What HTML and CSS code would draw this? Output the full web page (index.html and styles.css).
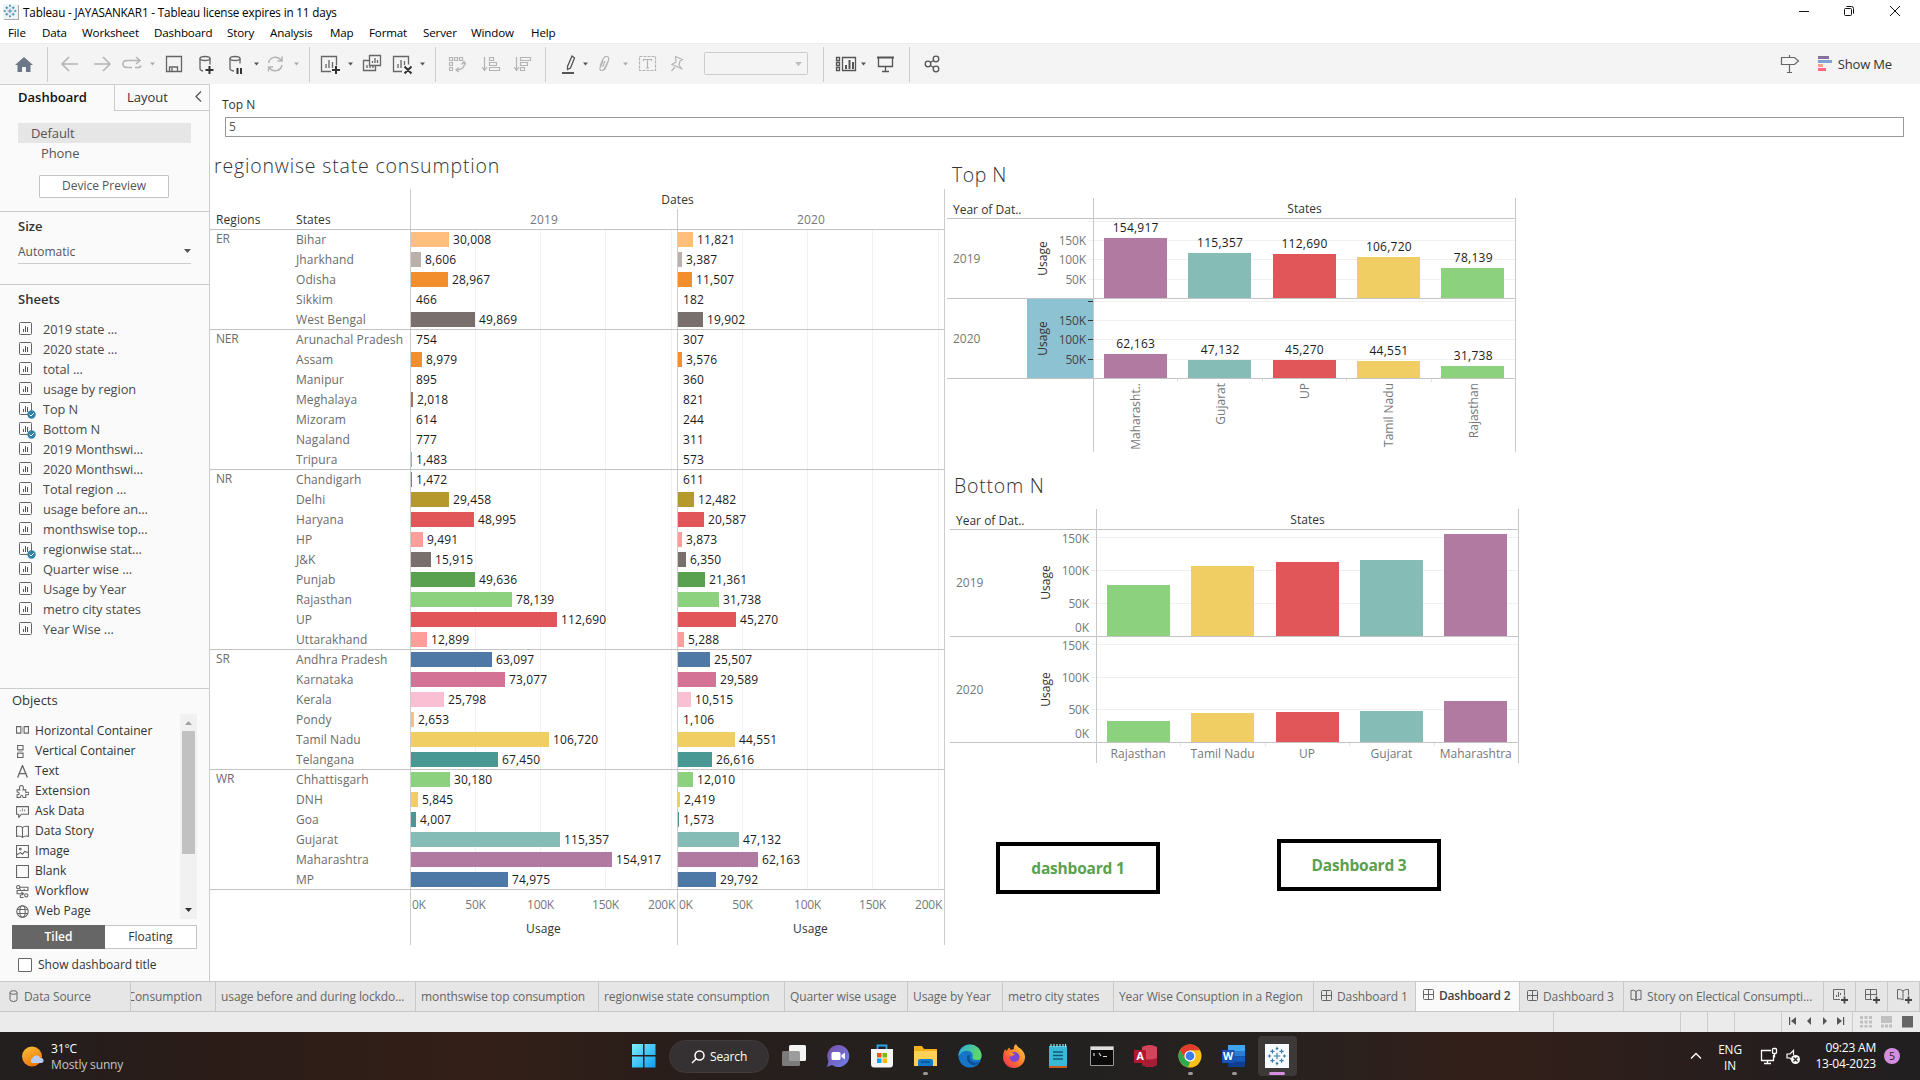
FILE: index.html
```html
<!DOCTYPE html>
<html lang="en">
<head>
<meta charset="utf-8">
<title>Tableau - JAYASANKAR1</title>
<link rel="stylesheet" href="styles.css">
</head>
<body>
<svg class="defs" width="0" height="0">
  <defs>
    <symbol id="tableau" viewBox="0 0 24 24"><path d="M12 8v8M8 12h8M12 1v4M10.300 3h3.400M12 19v4M10.300 21h3.400M1 12h4M3 10.300v3.400M19 12h4M21 10.300v3.400M6.500 4v5M4 6.500h5M17.500 4v5M15 6.500h5M6.500 15v5M4 17.500h5M17.500 15v5M15 17.500h5" fill="none" stroke="currentColor" stroke-width="1.400"/></symbol>
    <symbol id="sheet" viewBox="0 0 14 14"><rect x=".5" y=".5" width="12" height="12" rx="1" fill="none" stroke="#666"/><path d="M4.500 7v3M6.500 4v6M8.500 5v5" stroke="#555" fill="none"/></symbol>
    <symbol id="grid" viewBox="0 0 12 12"><rect x=".5" y=".5" width="10" height="10" rx="1" fill="none" stroke="#666"/><path d="M5.500 1v10M1 5.500h10" stroke="#666"/></symbol>
    <symbol id="book" viewBox="0 0 13 13"><path d="M1 1.500q3-1 5 1v9q-2-2-5-1zM11 1.500q-3-1-5 1v9q2-2 5-1z" fill="none" stroke="#666"/></symbol>
  </defs>
</svg>

<header class="titlebar">
  <span class="appicon"><svg width="14" height="14"><use href="#tableau"/></svg></span>
  <span class="title">Tableau - JAYASANKAR1 - Tableau license expires in 11 days</span>
  <svg class="winbtns" width="104" height="20" viewBox="0 0 104 20" fill="none" stroke="#111">
    <path d="M1 10.500h10"/><rect x="46.500" y="7.500" width="7" height="7" rx="1"/><path d="M48.500 5.500h5q2 0 2 2v5"/><path d="M92 5l10 10M102 5L92 15"/>
  </svg>
</header>
<nav class="menubar"><span>File</span><span>Data</span><span>Worksheet</span><span>Dashboard</span><span>Story</span><span>Analysis</span><span>Map</span><span>Format</span><span>Server</span><span>Window</span><span>Help</span></nav>

<div class="toolbar">
  <svg width="950" height="41" viewBox="0 43 950 41" fill="none">
    <path d="M47.500 47v35M309.500 47v35M435.500 47v35M545.500 47v35M823.500 47v35M909.500 47v35" stroke="#ccc"/>
    <path d="M24 57l-9 8h2.500v7h4.500v-5h4v5h4.500v-7H33z" fill="#6c7887"/>
    <g stroke="#b4b4b4" stroke-width="1.500">
      <path d="M62 64h16M69 57l-7 7 7 7M94 64h16M103 57l7 7-7 7"/>
      <path d="M132 67.500h-5q-4 0-4-3.500t4-3.500h12M136 57l4 3.500-4 3.500M135 67.500h3q2.500 0 3-2"/>
      <path d="M268.500 63a7 7 0 0 1 12.500-3M282 65a7 7 0 0 1-12.500 3M282 56.500v4.500h-4.500M268.500 71.500V67h4.500"/>
    </g>
    <g stroke="#666" stroke-width="1.300">
      <path d="M166.500 56.500h15v15h-15zM169.500 71v-4h8v4M172 71v-3"/>
      <ellipse cx="205" cy="58.500" rx="5" ry="2"/><path d="M200 58.500v10q0 2 3 2.500M210 58.500v6"/>
      <ellipse cx="235" cy="58.500" rx="5" ry="2"/><path d="M230 58.500v10q0 2 4 2.500M240 58.500v5"/>
      <path d="M331 71.500h-9.500v-15h15v9M326 68v-4M329 68v-8M332.500 68v-6"/>
      <path d="M369.500 55.500h11v10h-11zM372.500 63v-2M375 63v-5M377.500 63v-3M369 60.500h-5.500v10h12V66M367 68v-3M370 68v-2M373 68v-2"/>
      <path d="M402 71.500h-8.500v-15h15v8M398 68v-4M401 68v-8M404.500 65v-4"/>
    </g>
    <path d="M209.500 66v8M205.500 70h8M336 66v8M332 70h8M237.500 68v6M241 68v6M404.500 66.500l7 7M411.500 66.500l-7 7" stroke="#333" stroke-width="2"/>
    <g stroke="#b4b4b4" stroke-width="1.200">
      <path d="M449.500 57.500h3v3h-3zM454.500 57.500h3v3h-3zM459.500 57.500h3v3h-3zM449.500 62.500h3v3h-3zM449.500 67.500h3v3h-3zM464 62q2 7-7 8M461.500 64.500l2.500-3 2 3M459 67.500l-3 2.500 3 2"/>
      <path d="M484.500 57v13M482 67l2.500 3.500L487 67M489.500 57.500h4v3h-4zM489.500 62.500h7v3h-7zM489.500 67.500h10v3h-10z"/>
      <path d="M516.500 57v13M514 67l2.500 3.500L519 67M520.500 57.500h10v3h-10zM520.500 62.500h7v3h-7zM520.500 67.500h4v3h-4z"/>
      <path d="M603 61l-3 7q-.5 2.500 1.500 2.500t3-2l4-8q.8-3.500-1.500-4t-4 2.500l-3 7M605 61l-2.500 6"/>
      <path d="M608 62l-2.500 6q-1 2.500-3 2.500"/>
      <rect x="639.500" y="56.500" width="16" height="14" stroke-dasharray="3 1"/>
      <path d="M643.500 61v-1.500h8V61M647.500 60v8M646 68h3"/>
      <path d="M675.500 56.500l7 3-2.500 1.500-1 4 2.500 3.500-9.500-4 4-2.500zM675 67l-3.500 4"/>
    </g>
    <path d="M572 56l2.500 2-4 10-3 1.500v-3z" stroke="#555" stroke-width="1.300"/><path d="M562 73h12" stroke="#555" stroke-width="2"/>
    <rect x="704.500" y="52.500" width="103" height="22" rx="1" stroke="#ccc"/>
    <path d="M795 62h7l-3.500 4z" fill="#bbb"/>
    <path d="M150 62.500h5l-2.500 3zM294 62.500h5l-2.500 3zM623 62.500h5l-2.500 3z" fill="#aaa"/>
    <path d="M254 62.500h5l-2.500 3zM348 62.500h5l-2.500 3zM420 62.500h5l-2.500 3zM583 62.500h5l-2.500 3zM861 62.500h5l-2.500 3z" fill="#555"/>
    <g stroke="#555" stroke-width="1.300">
      <path d="M842.500 57.500h13v13h-13zM836.500 57.500h3v3h-3zM836.500 62.500h3v3h-3zM836.500 67.500h3v3h-3z"/><path d="M846 69v-4M849.500 69v-9M853 69v-7" stroke-width="2"/>
      <path d="M878.500 58v8.500h14V58M885.500 67v5M882 71.500h7"/><path d="M877 57.500h17" stroke-width="2"/>
      <circle cx="928" cy="64" r="2.800"/><circle cx="936" cy="59" r="2.800"/><circle cx="936" cy="69" r="2.800"/><path d="M930.500 62.500l3-2M930.500 65.500l3 2"/>
    </g>
  </svg>
  <div class="showme">
    <svg width="20" height="20" viewBox="0 0 20 20" fill="none" stroke="#666" stroke-width="1.200"><path d="M1.500 3.500h13l4 3.500-4 3.500h-13zM9.500 1v2M9.500 11v7M7 18.500h5"/></svg>
    <svg class="showme-icon" width="14" height="16" viewBox="0 0 14 16"><path d="M0 0h11v3H0z" fill="#86709b"/><path d="M0 4h14v3H0z" fill="#7fa3cf"/><path d="M0 8h5v3H0z" fill="#f2a384"/><path d="M0 12h8v3H0z" fill="#fb6c7c"/></svg>
    <span>Show Me</span>
  </div>
</div>

<div class="workspace">
  <aside class="side">
    <div class="side-tabs"><b>Dashboard</b><span class="tab-off">Layout<svg width="7" height="11" viewBox="0 0 7 11" fill="none" stroke="#555" stroke-width="1.300"><path d="M6 .5l-5 5 5 5"/></svg></span></div>
    <section class="device">
      <div class="dev sel">Default</div>
      <div class="dev phone">Phone</div>
      <div class="preview">Device Preview</div>
    </section>
    <section class="size">
      <h3>Size</h3>
      <div class="select"><span>Automatic</span><svg width="7" height="5"><path d="M0 0h7l-3.500 4z" fill="#555"/></svg></div>
    </section>
    <section class="sheets">
      <h3>Sheets</h3>
      <ul id="sheets"></ul>
    </section>
    <section class="objects">
      <h4>Objects</h4>
      <div class="objwrap">
        <ul id="objects"></ul>
        <div class="scroll"><svg width="7" height="4"><path d="M0 4h7l-3.500-4z" fill="#a0a0a0"/></svg><i></i><svg width="7" height="4"><path d="M0 0h7l-3.500 4z" fill="#333"/></svg></div>
      </div>
      <div class="toggle"><b>Tiled</b><span>Floating</span></div>
      <label class="check"><i></i>Show dashboard title</label>
    </section>
  </aside>

  <main class="canvas">
    <div class="param"><div class="param-name">Top N</div><div class="param-box">5</div></div>
    <div class="views">
      <section class="region-view">
        <h2>regionwise state consumption</h2>
        <div class="rtable">
          <div class="rhead">
            <div class="rh-regions">Regions</div><div class="rh-states">States</div>
            <div class="rh-dates"><div class="dates">Dates</div><div class="years"><span>2019</span><span>2020</span></div></div>
          </div>
          <div id="groups"></div>
          <div class="raxis">
            <div></div>
            <div class="axis"><div class="ticks"><span>0K</span><span>50K</span><span>100K</span><span>150K</span><span>200K</span></div><div class="axis-name">Usage</div></div>
            <div class="axis"><div class="ticks"><span>0K</span><span>50K</span><span>100K</span><span>150K</span><span>200K</span></div><div class="axis-name">Usage</div></div>
          </div>
        </div>
      </section>
      <section class="rank-views">
        <h2 class="t-top">Top N</h2>
        <svg id="topn" class="chart" width="570" height="255"></svg>
        <h2 class="t-bottom">Bottom N</h2>
        <svg id="bottomn" class="chart chart-b" width="570" height="255"></svg>
        <div class="links"><a class="l1">dashboard 1</a><a class="l3">Dashboard 3</a></div>
      </section>
    </div>
  </main>
</div>

<div class="tabs">
  <span class="tab ds"><svg width="9" height="12" viewBox="0 0 9 12" fill="none" stroke="#666"><ellipse cx="4.500" cy="2.500" rx="3.500" ry="1.800"/><path d="M1 2.500v7q0 2 3.500 2t3.500-2v-7"/></svg>Data Source</span>
  <span class="tab t1"><em>Consumption</em></span>
  <span class="tab t2">usage before and during lockdo...</span>
  <span class="tab t3">monthswise top consumption</span>
  <span class="tab t4">regionwise state consumption</span>
  <span class="tab t5">Quarter wise usage</span>
  <span class="tab t6">Usage by Year</span>
  <span class="tab t7">metro city states</span>
  <span class="tab t8">Year Wise Consuption in a Region</span>
  <span class="tab t9"><svg width="12" height="12"><use href="#grid"/></svg>Dashboard 1</span>
  <span class="tab t10 on"><svg width="12" height="12"><use href="#grid"/></svg>Dashboard 2</span>
  <span class="tab t11"><svg width="12" height="12"><use href="#grid"/></svg>Dashboard 3</span>
  <span class="tab t12"><svg width="13" height="13"><use href="#book"/></svg>Story on Electical Consumpti...</span>
  <span class="tab new"><svg width="16" height="16" viewBox="0 0 16 16" fill="none" stroke="#666"><path d="M8 11.500H1.500v-10h11v6M4.500 9V7M6.500 9V4M8.500 7V5"/><path d="M12.500 8.500v7M9 12h7" stroke="#444" stroke-width="1.800"/></svg></span>
  <span class="tab new"><svg width="16" height="16" viewBox="0 0 16 16" fill="none" stroke="#666"><path d="M8 11.500H1.500v-10h11v6M6.500 1.500v10M1.500 6.500h11"/><path d="M12.500 8.500v7M9 12h7" stroke="#444" stroke-width="1.800"/></svg></span>
  <span class="tab new"><svg width="16" height="16" viewBox="0 0 16 16" fill="none" stroke="#666"><path d="M7 3v9q-2-2-5.500-1V1.500Q5 1 7 3q2-2 5.500-1.500v6"/><path d="M12.500 8.500v7M9 12h7" stroke="#444" stroke-width="1.800"/></svg></span>
</div>
<div class="status">
  <i class="s1"></i><i class="s2"></i><i class="s3"></i><i class="s4"></i>
  <span class="nav"><svg width="56" height="8" viewBox="0 0 56 8" fill="#555"><path d="M0 0h1.200v8H0zM7 0v8L2 4zM22 0v8l-4-4zM34 0v8l4-4zM48 0v8l5-4zM54 0h1.200v8H54z"/></svg></span>
  <span class="modes"><svg width="54" height="12" viewBox="0 0 54 12"><path d="M0 0h3v3H0zM4.500 0h3v3h-3zM9 0h3v3H9zM0 4.500h3v3H0zM4.500 4.500h3v3h-3zM9 4.500h3v3H9zM0 9h3v2.500H0zM4.500 9h3v2.500h-3zM9 9h3v2.500H9zM21 0h11v7H21zM21 8.500h3v3h-3zM25 8.500h3v3h-3zM29 8.500h3v3h-3z" fill="#c0c0c0"/><path d="M42 0h11v11.500H42z" fill="#666"/></svg></span>
</div>

<footer class="taskbar">
  <div class="weather">
    <svg width="24" height="24" viewBox="0 0 24 24"><defs><linearGradient id="sun" x1="0" y1="0" x2=".5" y2="1"><stop offset="0" stop-color="#f7c136"/><stop offset="1" stop-color="#f0780f"/></linearGradient></defs><circle cx="11" cy="11.500" r="10" fill="url(#sun)"/><path d="M11 18a3 3 0 0 1 .5-5 4.500 4.500 0 0 1 8 0 2.500 2.500 0 0 1 1 5z" fill="#b7cdf8"/></svg>
    <div><div class="temp">31°C</div><div class="sky">Mostly sunny</div></div>
  </div>
  <div class="apps">
    <span class="app"><svg width="24" height="24" viewBox="0 0 24 24"><defs><linearGradient id="win" x1="0" y1="0" x2="1" y2="1"><stop offset="0" stop-color="#7ff0fb"/><stop offset="1" stop-color="#0b9cf5"/></linearGradient></defs><path d="M0 0h11v11H0zM12.500 0h11v11h-11zM0 12.500h11v11H0zM12.500 12.500h11v11h-11z" fill="url(#win)"/></svg></span>
    <span class="search"><svg width="14" height="14" viewBox="0 0 14 14" fill="none" stroke="#fff" stroke-width="1.500"><circle cx="8.500" cy="5.500" r="4.500"/><path d="M5.500 8.500L1 13"/></svg>Search</span>
    <span class="app"><svg width="26" height="24" viewBox="0 0 26 24"><rect x="8" y="1" width="17" height="16" rx="1.500" fill="#f4f4f4"/><rect x="1" y="7" width="18" height="15" rx="1.500" fill="#8c8c8c" fill-opacity=".85"/></svg></span>
    <span class="app"><svg width="24" height="24" viewBox="0 0 24 24"><defs><linearGradient id="chat" x1="0" y1="0" x2="1" y2="1"><stop offset="0" stop-color="#7a4fa8"/><stop offset="1" stop-color="#6d7fe8"/></linearGradient></defs><path d="M12 1a11 11 0 1 1-6 20l-5 2 1.500-6A11 11 0 0 1 12 1z" fill="url(#chat)"/><rect x="5.500" y="8" width="9" height="8" rx="1.500" fill="#fff"/><path d="M15.500 11l3.500-2.500v7L15.500 13z" fill="#fff"/></svg></span>
    <span class="app"><svg width="24" height="24" viewBox="0 0 24 24"><path d="M7.500 5V1.500h9V5" fill="none" stroke="#2aa5ea" stroke-width="1.800"/><path d="M1 5h22v15q0 3.500-3 3.500H4q-3 0-3-3.500z" fill="#f5f5f5"/><path d="M7 9h4.500v4.500H7z" fill="#f25022"/><path d="M12.500 9H17v4.500h-4.500z" fill="#7fba00"/><path d="M7 14.500h4.500V19H7z" fill="#00a4ef"/><path d="M12.500 14.500H17V19h-4.500z" fill="#ffb900"/></svg></span>
    <span class="app run"><svg width="25" height="24" viewBox="0 0 25 24"><path d="M1 2h8l2 3H24v17H1z" fill="#f2b01e"/><path d="M1 7h23v15H1z" fill="#ffd257"/><path d="M5 22v-5q0-2 2-2h11q2 0 2 2v5z" fill="#1479c9"/><path d="M8 18h9" stroke="#0a5a9c" stroke-width="2"/></svg></span>
    <span class="app"><svg width="24" height="24" viewBox="0 0 24 24"><defs><linearGradient id="edge" x1="0" y1="0" x2="1" y2=".3"><stop offset="0" stop-color="#2aa9e0"/><stop offset="1" stop-color="#5fd86a"/></linearGradient></defs><circle cx="12" cy="12" r="11.500" fill="#1576c8"/><path d="M.5 12A11.500 11.500 0 0 1 23.500 12q0 4-4 4-6 0-5-3 1-5-4-6-6-1-10 5z" fill="url(#edge)"/><path d="M9 12q-1 8 7 9.500 3-.5 5-3.500-6 2-9-2-1-3 0-5-2 0-3 1z" fill="#0c4f96"/></svg></span>
    <span class="app"><svg width="24" height="24" viewBox="0 0 24 24"><defs><linearGradient id="ff" x1="1" y1="0" x2="0" y2="1"><stop offset="0" stop-color="#ffdc3c"/><stop offset=".5" stop-color="#ff7a2a"/><stop offset="1" stop-color="#f1255f"/></linearGradient></defs><path d="M3 5l1.500 2L7 3.500 9 6q2-1 3-1-1-3 2-5 2 4 5 5 4 4 4 8a11 11 0 0 1-22 0q0-4 2-8z" fill="url(#ff)"/><circle cx="12.500" cy="13" r="5" fill="#7b45d8"/><path d="M7 9q4-1 6 2-3 0-4 2z" fill="#ff8f2b"/></svg></span>
    <span class="app"><svg width="20" height="24" viewBox="0 0 20 24"><path d="M1 2h18v20H1z" fill="#39b8d8"/><path d="M1 22h18v2H1z" fill="#c65b1c"/><path d="M3 0v3M6 0v3M9 0v3M12 0v3M15 0v3M17.500 0v3" stroke="#a7e4f2" stroke-width="1.200"/><path d="M5 8h10M5 11.500h10M5 15h10" stroke="#105a78" stroke-width="1.500"/></svg></span>
    <span class="app"><svg width="24" height="22" viewBox="0 0 24 22"><path d="M.5 1.500h23v19H.5z" fill="#0a0a0a" stroke="#999"/><path d="M1 2h22v3H1z" fill="#ddd"/><path d="M4 8v3M7 8.500h.1M7 11h.1M9 8l2 3M13 11.500h4" stroke="#ddd" stroke-width="1.200"/></svg></span>
    <span class="app"><svg width="24" height="24" viewBox="0 0 24 24"><path d="M8 3q8-4 15 0v18q-7 4-15 0z" fill="#d3455a"/><path d="M8 14q8 3 15 0v7q-7 4-15 0z" fill="#a41e35"/><rect y="6" width="12" height="13" rx="1" fill="#b3182d"/><text x="6" y="16.200" text-anchor="middle" class="glyph">A</text></svg></span>
    <span class="app run"><svg width="24" height="24" viewBox="0 0 24 24"><circle cx="12" cy="12" r="11.500" fill="#fbc116"/><path d="M12 6.300h10A11.500 11.500 0 0 0 2 6.300L7 15z" fill="#e33b2e"/><path d="M2 6.300L7.200 15l4.800 3-2 5.300A11.500 11.500 0 0 1 2 6.300z" fill="#2da94f"/><circle cx="12" cy="12" r="5.600" fill="#fff"/><circle cx="12" cy="12" r="4.400" fill="#3c7de9"/></svg></span>
    <span class="app run"><svg width="24" height="24" viewBox="0 0 24 24"><path d="M6 1h17v6H6z" fill="#41a5ee"/><path d="M6 7h17v5.500H6z" fill="#2b7cd3"/><path d="M6 12.500h17V18H6z" fill="#185abd"/><path d="M6 17.500h17V23H6z" fill="#103f91"/><rect y="6" width="12.500" height="13" rx="1" fill="#1854b4"/><text x="6.200" y="16.200" text-anchor="middle" class="glyph">W</text></svg></span>
    <span class="app active"><svg width="24" height="24" viewBox="0 0 24 24" color="#3d7ea6"><path d="M0 0h24v24H0z" fill="#f7fbfd"/><use href="#tableau" x="2" y="2" width="20" height="20"/></svg></span>
  </div>
  <div class="tray">
    <svg class="up" width="12" height="8" viewBox="0 0 12 8" fill="none" stroke="#fff" stroke-width="1.400"><path d="M1 6.500l5-5 5 5"/></svg>
    <span class="lang">ENG<br>IN</span>
    <svg class="net" width="18" height="18" viewBox="0 0 18 18" fill="none" stroke="#fff" stroke-width="1.300"><path d="M11 3.500H1.500v10h12V8M4 16.500h7M7.500 14v2.500"/><rect x="12.500" y="1.500" width="4" height="5" rx="1"/><path d="M14.500 6.500v4"/></svg>
    <svg class="vol" width="15" height="16" viewBox="0 0 15 16" fill="none" stroke="#fff" stroke-width="1.200"><path d="M6 11L4 9H1V5h3l3.500-3.500V6"/><circle cx="9.500" cy="10.500" r="4.500" fill="#fff" stroke="none"/><path d="M7.500 8.500l4 4M11.500 8.500l-4 4" stroke="#222"/></svg>
    <span class="clock">09:23 AM<br>13-04-2023</span>
    <span class="badge">5</span>
  </div>
</footer>
<script src="app.js"></script>
</body>
</html>
```
FILE: styles.css
```css
* { box-sizing: border-box; }
body { margin: 0; width: 1920px; height: 1080px; overflow: hidden; background: #fff; font: 12px/20px "Open Sans", "Noto Sans", sans-serif; color: #333; display: flex; flex-direction: column; }
h2, h3, h4, ul { margin: 0; padding: 0; font-weight: 400; }
ul { list-style: none; }
svg { display: block; flex: none; }
.defs { position: absolute; }

.titlebar { height: 22px; flex: none; display: flex; align-items: center; padding: 0 18px 0 3px; color: #000; }
.appicon { width: 15px; height: 15px; background: #eef3f6; color: #2f7fae; box-shadow: 1px 1px 0 #aaa; margin-right: 5px; }
.title { flex: 1; font-size: 11.7px; letter-spacing: -.15px; padding-top: 1px; }
.menubar { height: 21px; flex: none; display: grid; grid-template-columns: 34px 40px 72px 73px 43px 60px 39px 54px 48px 60px auto; padding: 1px 0 0 8px; font-size: 11.6px; letter-spacing: -.15px; color: #000; }
.toolbar { height: 41px; flex: none; background: #f4f4f4; border-top: 1px solid #ececec; display: flex; justify-content: space-between; }
.toolbar > svg { margin-top: -1px; }
.showme { display: flex; align-items: center; padding: 0 28px 1px 0; font-size: 13px; letter-spacing: -.15px; }
.showme-icon { margin: 0 6px 0 18px; }

.workspace { height: 897px; flex: none; display: flex; }
.side { width: 210px; border-right: 1px solid #ccc; border-top: 1px solid #d0d0d0; background: #fafafa; display: flex; flex-direction: column; }
.side-tabs { height: 26px; flex: none; display: flex; font-size: 13px; line-height: 24px; }
.side-tabs b { width: 114px; padding-left: 18px; color: #111; font-weight: 600; }
.tab-off { flex: 1; border: solid #ccc; border-width: 0 0 1px 1px; padding: 0 7px 2px 12px; display: flex; justify-content: space-between; align-items: center; }
.device { height: 101px; padding: 12px 18px 0; border-bottom: 1px solid #ccc; color: #555; font-size: 13px; letter-spacing: -.1px; }
.dev { height: 20px; padding-left: 13px; }
.sel { background: #e6e6e6; }
.phone { padding-left: 23px; }
.preview { width: 130px; height: 23px; margin: 12px 0 0 21px; border: 1px solid #c4c4c4; border-radius: 1px; background: #fff; font-size: 12px; letter-spacing: 0; line-height: 20px; text-align: center; }
.size { height: 73px; padding: 4px 18px 0; border-bottom: 1px solid #ccc; }
h3 { font-size: 13px; font-weight: 600; line-height: 20px; }
.select { height: 25px; margin-top: 3px; padding-top: 1px; border-bottom: 1px solid #ccc; display: flex; justify-content: space-between; align-items: center; color: #555; font-size: 12px; }
.sheets { height: 404px; padding: 4px 18px 0; border-bottom: 1px solid #ccc; }
#sheets { margin-top: 10px; }
#sheets li { height: 20px; display: flex; align-items: center; font-size: 12.8px; letter-spacing: -.08px; color: #4a4a4a; }
#sheets .ic { position: relative; width: 24px; height: 14px; margin: -1px 0 0 1px; flex: none; }
#sheets .ic svg + svg { position: absolute; left: 8px; top: 8px; }
.objects { padding: 1px 12px 0; }
h4 { font-size: 13px; line-height: 20px; }
.objwrap { display: flex; justify-content: space-between; height: 205px; margin-top: 4px; }
#objects { padding-top: 7px; }
#objects li { height: 20px; display: flex; align-items: center; gap: 6px; padding-left: 4px; font-size: 12.1px; }
.scroll { width: 17px; background: #f1f1f1; display: flex; flex-direction: column; align-items: center; padding: 7px 0; }
.scroll i { width: 13px; height: 123px; margin: 6px 0 auto; background: #c1c1c1; }
.toggle { display: flex; height: 24px; margin-top: 6px; line-height: 22px; text-align: center; }
.toggle b { width: 93px; background: #666; color: #fff; font-weight: 600; border: 1px solid #666; }
.toggle span { flex: 1; border: 1px solid #c4c4c4; border-left: 0; background: #fff; }
.check { display: flex; align-items: center; gap: 6px; margin: 6px 0 0 6px; height: 20px; }
.check i { width: 14px; height: 14px; border: 1px solid #666; border-radius: 1px; background: #fff; }

.canvas { flex: 1; display: flex; flex-direction: column; padding: 11px 16px 0 0; }
.param { height: 55px; flex: none; padding-left: 12px; }
.param-box { height: 20px; margin: 2px 0 0 3px; border: 1px solid #999; padding-left: 3px; line-height: 18px; color: #555; }
.views { display: flex; flex: 1; }
.region-view { width: 735px; }
h2 { font-size: 19.5px; font-weight: 300; line-height: 28px; color: #333; white-space: nowrap; }
.region-view h2 { padding: 2px 0 0 4px; height: 39px; letter-spacing: .83px; }
.rtable { color: #6b6b6b; letter-spacing: .08px; }
.rhead { display: flex; height: 41px; border-bottom: 1px solid #c4c4c4; color: #333; }
.rh-regions { width: 86px; padding: 21px 0 0 6px; font-weight: 500; }
.rh-states { width: 114px; padding-top: 21px; font-weight: 500; }
.rh-dates { width: 535px; border: solid #ccc; border-width: 0 1px; text-align: center; font-weight: 500; }
.dates { height: 20px; padding-top: 1px; }
.years { display: flex; height: 20px; font-weight: 400; color: #777; letter-spacing: .2px; }
.years span { width: 266px; padding-top: 1px; }
.years span + span { width: 267px; border-left: 1px solid #ccc; }
.group { display: grid; grid-template-columns: 86px 114px 267px 268px; border-bottom: 1px solid #c4c4c4; }
.gname { padding-left: 6px; line-height: 18px; letter-spacing: -.2px; }
.cell { height: 20px; white-space: nowrap; }
.group .cells .cell:last-child { height: 19px; }
.pane { border-left: 1px solid #ccc; background: linear-gradient(#f2f2f2, #f2f2f2) 64px 0 / 1px 100% no-repeat, linear-gradient(#f2f2f2, #f2f2f2) 129px 0 / 1px 100% no-repeat, linear-gradient(#f2f2f2, #f2f2f2) 194px 0 / 1px 100% no-repeat, linear-gradient(#f2f2f2, #f2f2f2) 260px 0 / 1px 100% no-repeat; }
.pane:last-child { border-right: 1px solid #ccc; }
.pane .cell { display: flex; align-items: flex-start; color: #1c1c1c; letter-spacing: .15px; }
.bar { height: 15px; margin: 2px 4px 0 0; flex: none; }
.raxis { display: grid; grid-template-columns: 200px 267px 268px; height: 55px; color: #777; }
.axis { border-left: 1px solid #ccc; }
.axis:last-child { border-right: 1px solid #ccc; }
.ticks { display: grid; grid-template-columns: 31px 65px 65px 65px 1fr; padding: 5px 2px 0 1px; height: 24px; text-align: center; letter-spacing: -.25px; }
.ticks span:first-child { text-align: left; }
.ticks span:last-child { text-align: right; }
.axis-name { text-align: center; color: #333; font-weight: 500; padding: 5px 1px 0 0; }
.rank-views { flex: 1; padding: 10px 0 0 2px; }
.rank-views h2 { height: 38px; letter-spacing: .5px; padding-top: 1px; }
.rank-views .t-top { padding-left: 5px; }
.rank-views .t-bottom { padding-left: 7px; margin-top: 18px; letter-spacing: .75px; }
.chart-b { margin-left: 3px; }
.chart text { font-size: 12px; fill: #777; }
.chart .num { fill: #1c1c1c; letter-spacing: .25px; }
.chart .head { fill: #333; font-weight: 500; }
.chart .dark { fill: #444; }
.chart .tick { letter-spacing: -.15px; }
.links { display: flex; margin: 75px 0 0 49px; gap: 117px; }
.links a { width: 164px; height: 52px; border: 4px solid #000; text-align: center; line-height: 45px; font-size: 15.5px; letter-spacing: -.2px; font-weight: 700; color: #59a14f; background: #fff; }
.l1 { margin-top: 3px; }

.tabs { height: 31px; flex: none; display: flex; background: #e6e6e6; border: solid #c8c8c8; border-width: 1px 0; color: #666; white-space: nowrap; }
.tab { flex: none; border-right: 1px solid #c8c8c8; display: flex; align-items: center; gap: 4px; padding-left: 5px; overflow: hidden; letter-spacing: -.1px; }
.tab svg { margin-bottom: 2px; }
.ds { width: 131px; padding-left: 9px; gap: 6px; }
.t1 { width: 85px; justify-content: flex-end; padding: 0 13px 0 0; }
.t1 em { font-style: normal; }
.t2 { width: 200px; } .t3 { width: 183px; } .t4 { width: 186px; } .t5 { width: 123px; }
.t6 { width: 95px; } .t7 { width: 111px; } .t8 { width: 200px; }
.t9 { width: 102px; padding-left: 7px; } .t10 { width: 104px; padding-left: 7px; } .t11 { width: 104px; padding-left: 7px; } .t12 { width: 200px; padding-left: 6px; }
.new { width: 32px; padding-left: 8px; }
.on { background: #fafafa; font-weight: 600; letter-spacing: -.2px; color: #444; line-height: 18px; padding-bottom: 2px; }
.status { height: 20px; flex: none; background: #ebebeb; display: flex; justify-content: flex-end; }
.status i, .status span { border-left: 1px solid #ccc; }
.s1 { width: 127px; } .s2 { width: 27px; } .s3 { width: 27px; } .s4 { width: 47px; }
.nav { width: 71px; padding: 5px 0 0 7px; }
.modes { width: 68px; padding: 4px 0 0 7px; }

.taskbar { height: 48px; flex: none; background: linear-gradient(90deg, #221f1f 0, #2a1c18 10%, #331f17 25%, #281e1b 36%, #222120 52%, #262220 66%, #331f19 77%, #261e1e 92%, #211f20 100%); color: #fff; display: flex; align-items: stretch; line-height: 16px; }
.weather { width: 622px; display: flex; align-items: center; gap: 6px; padding: 1px 0 0 21px; letter-spacing: -.15px; }
.sky { color: #c8c4c3; }
.apps { display: flex; align-items: center; }
.app { width: 44.100px; height: 48px; display: flex; align-items: center; justify-content: center; position: relative; }
.search { width: 100px; height: 33px; margin: 0 2.500px 0 4px; border-radius: 17px; background: #353132; border: 1px solid #403c3c; display: flex; align-items: center; gap: 5px; padding: 1px 0 0 21px; letter-spacing: -.15px; }
.app:first-child { width: 43px; }
.run::after, .active::after { content: ""; position: absolute; bottom: 5px; width: 5px; height: 3px; border-radius: 2px; background: #999; }
.active::after { width: 16px; background: #d68fe0; }
.active { height: 40px; width: 39px; margin-left: 1px; border-radius: 4px; background: #3d3938; }
.active::after { bottom: 1px; }
.glyph { font-size: 10.500px; font-weight: 700; fill: #fff; }
.tray { margin-left: auto; display: flex; align-items: center; padding-right: 20px; }
.up { margin-right: 16px; }
.lang { text-align: center; width: 24px; font-size: 11.800px; letter-spacing: -.1px; padding-top: 1px; }
.net { margin-left: 18px; }
.vol { margin: 2px 15px 0 8px; }
.clock { text-align: right; font-size: 12px; letter-spacing: -.2px; width: 62px; margin-left: -2px; }
.badge { width: 16px; height: 16px; margin-left: 8px; border-radius: 50%; background: #d68fe0; color: #222; font-size: 10.500px; text-align: center; line-height: 16px; }
```
FILE: app.js
```js
const $ = id => document.getElementById(id);

const sheets = ['2019 state ...', '2020 state ...', 'total ...', 'usage by region', 'Top N*', 'Bottom N*', '2019 Monthswi...', '2020 Monthswi...', 'Total region ...', 'usage before an...', 'monthswise top...', 'regionwise stat...*', 'Quarter wise ...', 'Usage by Year', 'metro city states', 'Year Wise ...'];
const check = '<svg width="9" height="9" viewBox="0 0 9 9"><circle cx="4.500" cy="4.500" r="4.200" fill="#3182a8"/><path d="M2.500 4.500l1.500 1.500 2.800-2.800" stroke="#fff" fill="none"/></svg>';
$('sheets').innerHTML = sheets.map(s => `<li><span class="ic"><svg width="14" height="14"><use href="#sheet"/></svg>${s.endsWith('*') ? check : ''}</span>${s.replace('*', '')}</li>`).join('');

const objects = [
  ['Horizontal Container', '<path d="M.5 1.500h4v6h-4zM7.500 1.500h4v6h-4z"/><path d="M5 2h2v5H5z" fill="#bbb" stroke="none"/>'],
  ['Vertical Container', '<path d="M1.500 .5h5v4h-5zM1.500 7.500h5v4h-5z"/><path d="M2 5h4v2H2z" fill="#bbb" stroke="none"/>'],
  ['Text', '<path d="M1.500 11.500L6 .5l4.500 11M3 8h6" stroke-width="1.200"/>'],
  ['Extension', '<path d="M1 4.500h2.500q-1-4 1.500-4t1.500 4H9v2.500q3-1 3 .7T9 9v2.500H6.500q0-2-1.200-2T4 11.500H1V9q2 0 2-1.200T1 6.500z"/>'],
  ['Ask Data', '<path d="M.5 1.500h11v7H5l-2.500 3v-3h-2z"/><path d="M4 6V4.500M6 6V3M8 6V4" stroke="#999"/>'],
  ['Data Story', '<path d="M6 2.500Q4 .5.500 1.500v9Q4 9.500 6 11.500 8 9.500 11.500 10.500v-9Q8 .5 6 2.500zv9"/>'],
  ['Image', '<path d="M.5.500h11v11H.500zM1 9l3-2 2 1.500L8 6l3 1"/><circle cx="4" cy="3.800" r=".8"/>'],
  ['Blank', '<path d="M.5.500h11v11H.500z"/>'],
  ['Workflow', '<circle cx="2" cy="2" r="1.500"/><path d="M3.500 2H11v3H1v3h6M5 6.500L7 8 5 9.500M4 3.500v2M7.500 3.500v2M4 9v2.500h3"/><circle cx="9.500" cy="9.500" r="1.500"/>'],
  ['Web Page', '<circle cx="6" cy="6" r="5.300"/><ellipse cx="6" cy="6" rx="2.500" ry="5.300"/><path d="M1 4.200h10M1 7.800h10"/>']
];
$('objects').innerHTML = objects.map(([n, p]) => `<li><svg width="13" height="13" viewBox="0 0 12 12" fill="none" stroke="#666">${p}</svg>${n}</li>`).join('');

const regions = {
  ER: [['Bihar', 30008, 11821, '#ffbe7d'], ['Jharkhand', 8606, 3387, '#bab0ac'], ['Odisha', 28967, 11507, '#f28e2b'], ['Sikkim', 466, 182, '#fff'], ['West Bengal', 49869, 19902, '#79706e']],
  NER: [['Arunachal Pradesh', 754, 307, '#fff'], ['Assam', 8979, 3576, '#f28e2b'], ['Manipur', 895, 360, '#fff'], ['Meghalaya', 2018, 821, '#9d7660'], ['Mizoram', 614, 244, '#fff'], ['Nagaland', 777, 311, '#fff'], ['Tripura', 1483, 573, '#86bcb6']],
  NR: [['Chandigarh', 1472, 611, '#59a14f'], ['Delhi', 29458, 12482, '#b6992d'], ['Haryana', 48995, 20587, '#e15759'], ['HP', 9491, 3873, '#ff9d9a'], ['J&amp;K', 15915, 6350, '#79706e'], ['Punjab', 49636, 21361, '#59a14f'], ['Rajasthan', 78139, 31738, '#8cd17d'], ['UP', 112690, 45270, '#e15759'], ['Uttarakhand', 12899, 5288, '#ff9d9a']],
  SR: [['Andhra Pradesh', 63097, 25507, '#4e79a7'], ['Karnataka', 73077, 29589, '#d37295'], ['Kerala', 25798, 10515, '#fabfd2'], ['Pondy', 2653, 1106, '#ffbe7d'], ['Tamil Nadu', 106720, 44551, '#f1ce63'], ['Telangana', 67450, 26616, '#499894']],
  WR: [['Chhattisgarh', 30180, 12010, '#8cd17d'], ['DNH', 5845, 2419, '#f1ce63'], ['Goa', 4007, 1573, '#499894'], ['Gujarat', 115357, 47132, '#86bcb6'], ['Maharashtra', 154917, 62163, '#b07aa1'], ['MP', 74975, 29792, '#4e79a7']]
};
const fmt = n => n.toLocaleString('en-US');
const bar = (v, c) => {
  const w = Math.max(Math.floor(v * 0.0013 - 0.2), 1);
  return `<div class="cell"><i class="bar" style="width:${w}px;background:${v >= 1200 ? c : 'transparent'}"></i>${fmt(v)}</div>`;
};
$('groups').innerHTML = Object.entries(regions).map(([r, rows]) => `<div class="group"><div class="gname">${r}</div><div class="cells">${rows.map(s => `<div class="cell">${s[0]}</div>`).join('')}</div><div class="pane cells">${rows.map(s => bar(s[1], s[3])).join('')}</div><div class="pane cells">${rows.map(s => bar(s[2], s[3])).join('')}</div></div>`).join('');

const colors = { Maharashtra: '#b07aa1', 'Maharasht..': '#b07aa1', Gujarat: '#86bcb6', UP: '#e15759', 'Tamil Nadu': '#f1ce63', Rajasthan: '#8cd17d' };

// Two stacked yearly panes sharing one row of state columns.
function rankChart(id, c) {
  const L = 146, R = 568, cw = (R - L) / 5;
  let o = '';
  const line = (x1, y1, x2, y2, s) => { o += `<path d="M${x1} ${y1}L${x2} ${y2}" stroke="${s}"/>`; };
  const text = (x, y, t, cls, a = 'start', rot = '') => { o += `<text x="${x}" y="${y}" class="${cls}" text-anchor="${a}"${rot ? ` transform="rotate(-90 ${x} ${y})"` : ''}>${t}</text>`; };
  c.panes.forEach(p => {
    if (p.selected) o += `<rect x="80" y="${p.top}" width="66" height="${p.base - p.top}" fill="#8dc2d2"/>`;
    p.grid.forEach(g => {
      line(L + 1, g + .5, R, g + .5, '#f0f0f0');
      line(L - 5, g + .5, L, g + .5, p.selected ? '#333' : '#f0f0f0');
    });
    p.labels.forEach(([t, y]) => text(L - 7, y + 4.3, t, p.selected ? 'tick dark' : 'tick', 'end'));
    text(6, p.mid + 4.3, p.year, '');
    text(100, p.mid, 'Usage', 'head', 'middle', 1);
    c.names.forEach((n, i) => {
      const h = p.heights[i], x = Math.round(L + cw * i + cw * .125 + (i === 2 ? .6 : 0));
      o += `<rect x="${x}" y="${p.base - h}" width="63" height="${h}" fill="${colors[n]}"/>`;
      if (c.showValues) text(L + cw * (i + .5) + .5, p.base - h - 6, fmt(p.values[i]), 'num', 'middle');
    });
    line(0, p.base + .5, R, p.base + .5, '#c4c4c4');
  });
  const last = c.panes[1].base;
  for (let i = 1; i < 5; i++) line(Math.round(L + cw * i) + .5, last + 1, Math.round(L + cw * i) + .5, last + 4, '#e4e4e4');
  c.names.forEach((n, i) => {
    const x = L + cw * (i + .5);
    if (c.vertical) text(x + 5, last + 5, n, 'vert', 'end', 1); else text(x, last + 16, n, '', 'middle');
  });
  line(0, 20.5, R, 20.5, '#c4c4c4');
  line(L + .5, 0, L + .5, 254, '#c8c8c8');
  line(R + .5, 0, R + .5, 254, '#c8c8c8');
  text(6, 16.3, 'Year of Dat..', 'head');
  text((L + R) / 2 + .5, 15, 'States', 'head', 'middle');
  $(id).innerHTML = o;
}

rankChart('topn', {
  names: ['Maharasht..', 'Gujarat', 'UP', 'Tamil Nadu', 'Rajasthan'], showValues: true, vertical: true,
  panes: [
    { year: 2019, top: 21, base: 100, mid: 60.500, grid: [23, 42, 61, 81], labels: [['150K', 42.500], ['100K', 61.500], ['50K', 81.500]], heights: [60, 45, 44, 41, 30], values: [154917, 115357, 112690, 106720, 78139] },
    { year: 2020, top: 101, base: 180, mid: 140.500, grid: [103, 122, 141, 161], selected: true, labels: [['150K', 122.500], ['100K', 141.500], ['50K', 161.500]], heights: [24, 18, 18, 17, 12], values: [62163, 47132, 45270, 44551, 31738] }
  ]
});
rankChart('bottomn', {
  names: ['Rajasthan', 'Tamil Nadu', 'UP', 'Gujarat', 'Maharashtra'],
  panes: [
    { year: 2019, top: 21, base: 127, mid: 73.500, grid: [28, 61, 94], labels: [['150K', 29.500], ['100K', 61.500], ['50K', 94.500], ['0K', 118.500]], heights: [51, 70, 74, 76, 102] },
    { year: 2020, top: 128, base: 233, mid: 180.500, grid: [135, 168, 200], labels: [['150K', 136.500], ['100K', 168.500], ['50K', 200.500], ['0K', 224.500]], heights: [21, 29, 30, 31, 41] }
  ]
});
```
